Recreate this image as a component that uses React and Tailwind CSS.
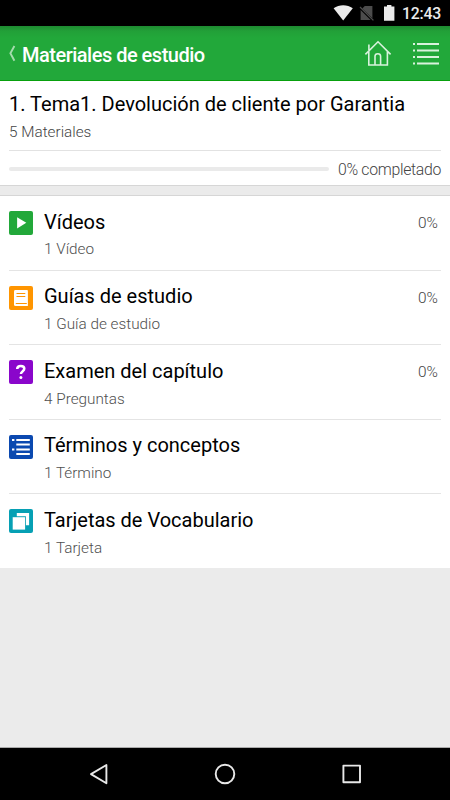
const MATERIALS = [
  { title: 'Vídeos', detail: '1 Vídeo', percent: '0%', color: '#22a83a', icon: PlayIcon },
  { title: 'Guías de estudio', detail: '1 Guía de estudio', percent: '0%', color: '#ff9500', icon: BookIcon },
  { title: 'Examen del capítulo', detail: '4 Preguntas', percent: '0%', color: '#8a06cb', icon: QuestionIcon },
  { title: 'Términos y conceptos', detail: '1 Término', color: '#0b49b0', icon: TermsIcon },
  { title: 'Tarjetas de Vocabulario', detail: '1 Tarjeta', color: '#06a0b4', icon: CardsIcon },
]

function PlayIcon() {
  return <path d="M8.1 6.2v11.2l9.2-5.6z" fill="#fff" />
}

function BookIcon() {
  return (
    <>
      <path d="M6.4 4H18a.9.9 0 0 1 .9.9V20H6.6A1.6 1.6 0 0 1 5 18.4V5.4A1.4 1.4 0 0 1 6.4 4z" fill="#fff" />
      <path d="M7.5 7.5h8.8M7.5 10.5h8.8M6.8 17.5h11" stroke="#ff9500" strokeWidth="1.2" />
    </>
  )
}

function QuestionIcon() {
  return (
    <>
      <path d="M8.2 9c.1-2 1.5-3 3.6-3s3.5 1 3.5 2.8c0 2.3-3.4 2.5-3.4 5.3" fill="none" stroke="#fff" strokeWidth="2.5" />
      <circle cx="11.9" cy="17.6" r="1.5" fill="#fff" />
    </>
  )
}

function TermsIcon() {
  return (
    <>
      <path d="M7.3 5H20.8M7.3 9.5H20.8M7.3 14.5H20.8M7.3 19H20.8" stroke="#fff" strokeWidth="1.9" />
      <path d="M3 5h2.4M3 14.5h2.4" stroke="#fff" strokeWidth="2.2" />
    </>
  )
}

function CardsIcon() {
  return (
    <>
      <path d="M7.8 4h12.3v12.3h-3.2V7.2H7.8z" fill="#fff" />
      <path d="M3.7 8.2h12.4v12.4H3.7z" fill="#fff" />
    </>
  )
}

function StatusBar() {
  return (
    <div className="flex h-[26px] shrink-0 items-center justify-end bg-black pr-[9px] text-white">
      <svg width="62" height="26" viewBox="0 0 62 26" className="mr-[7px]">
        <path d="M.6 8.3C6.2 4.1 14.2 4.1 19.8 8.3L10.2 20.6z" fill="#ebebeb" />
        <path d="M31.8 6h7.6v12.2L29.3 8.4zM27.6 10L37.6 20H27.6z" fill="#4c4c4c" />
        <path d="M27 7l13.4 13.4" stroke="#4c4c4c" strokeWidth="1.3" />
        <path d="M54 5h4.4v1.4h3V20.8H51V6.4h3z" fill="#ebebeb" />
      </svg>
      <span className="mt-[2px] text-[15.8px] leading-5 font-medium tracking-[-0.2px] text-[#ececec]">12:43</span>
    </div>
  )
}

function TopBar() {
  return (
    <header className="flex h-[55px] shrink-0 items-center border-b border-[#08a00d] bg-[linear-gradient(#1e8a31_0px,#22a038_5px,#22a83a_12px)] pr-[10px] pl-[8px] text-white">
      <svg width="9" height="18" viewBox="0 0 9 18" fill="none" stroke="#a5dcae" strokeWidth="1.9">
        <path d="M6.4 2L2.4 9.3l4 7.5" />
      </svg>
      <h1 className="mt-[3px] ml-[5px] flex-1 text-[20px] leading-6 font-medium tracking-[-0.5px] whitespace-nowrap">Materiales de estudio</h1>
      <svg width="28" height="28" viewBox="0 0 28 28" fill="none" stroke="#d9f2dd" strokeWidth="1.6" className="mr-[20px]">
        <path d="M1.4 15.4L14 2.8l12.6 12.6M4.8 12v14h18.6V12M4.9 11V5.5M11 26v-8.7c0-1.6 1-2.6 2.8-2.6s2.8 1 2.8 2.6V26" />
      </svg>
      <svg width="28" height="26" viewBox="0 0 28 26" stroke="#d9f2dd" strokeWidth="2">
        <path d="M5 4h22M5 10.5h22M5 17h22M5 23.5h22" />
        <path d="M1 4h2M1 10.5h2M1 17h2M1 23.5h2" />
      </svg>
    </header>
  )
}

function Summary() {
  return (
    <section className="h-[104px] shrink-0 bg-white px-[9px] pt-[10px]">
      <h2 className="text-[20px] leading-[26px] whitespace-nowrap">1. Tema1. Devolución de cliente por Garantia</h2>
      <p className="mt-[4px] h-[30px] border-b border-[#e2e2e2] pt-px text-[15.3px] leading-[21px] font-light text-[#444]">5 Materiales</p>
      <div className="flex h-[35px] items-center gap-[9px]">
        <div className="h-[4px] flex-1 rounded-full bg-[#eaeaea]" />
        <span className="pt-[2px] text-[15.8px] leading-5 font-light tracking-[-0.3px] whitespace-nowrap text-[#444]">0% completado</span>
      </div>
    </section>
  )
}

function MaterialRow({ item, last }) {
  const Icon = item.icon
  return (
    <li className={last ? 'flex h-[73.6px]' : 'flex h-[74.6px] border-b border-[#e4e4e4]'}>
      <svg width="24" height="24" viewBox="0 0 24 24" className="mt-[15px] shrink-0">
        <rect width="24" height="24" rx="2" fill={item.color} />
        <Icon />
      </svg>
      <div className="ml-[11px] flex-1 pt-[12.6px]">
        <h3 className="text-[20px] leading-[26px]">{item.title}</h3>
        <p className="mt-[4.8px] text-[15.3px] leading-[21px] font-light text-[#505050]">{item.detail}</p>
      </div>
      {item.percent && <span className="mt-[17px] mr-[3px] text-[15.4px] leading-5 font-light text-[#444]">{item.percent}</span>}
    </li>
  )
}

function NavBar() {
  return (
    <nav className="flex h-[52px] shrink-0 items-center justify-center bg-black">
      <svg width="310" height="52" viewBox="70 748 310 52" fill="none" stroke="#e8e8e8" strokeWidth="1.9" strokeLinejoin="round">
        <path d="M106.4 765v18.2L91 774.1z" />
        <circle cx="225" cy="774" r="9.3" />
        <path d="M343.4 765.6h16.6v16.6h-16.6z" />
      </svg>
    </nav>
  )
}

export default function App() {
  return (
    <div className="flex h-[800px] w-[450px] flex-col overflow-hidden bg-[#ebebeb] font-['Roboto',sans-serif] text-black">
      <StatusBar />
      <TopBar />
      <Summary />
      <div className="h-[11px] shrink-0 border-y border-[#d6d6d6] bg-[#ebebeb]" />
      <ul className="shrink-0 bg-white px-[9px]">
        {MATERIALS.map((item, i) => (
          <MaterialRow key={item.title} item={item} last={i === MATERIALS.length - 1} />
        ))}
      </ul>
      <div className="flex-1 border-b border-[#aaa]" />
      <NavBar />
    </div>
  )
}
